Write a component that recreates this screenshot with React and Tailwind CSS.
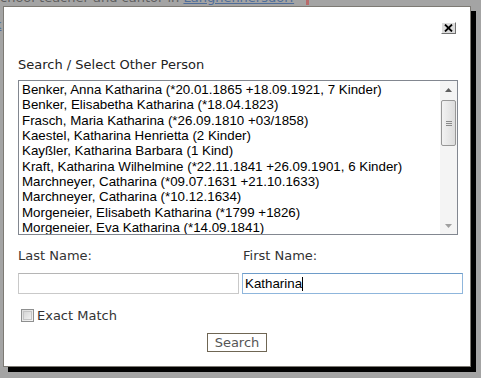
import React from "react";

const items = [
  "Benker, Anna Katharina (*20.01.1865 +18.09.1921, 7 Kinder)",
  "Benker, Elisabetha Katharina (*18.04.1823)",
  "Frasch, Maria Katharina (*26.09.1810 +03/1858)",
  "Kaestel, Katharina Henrietta (2 Kinder)",
  "Kayßler, Katharina Barbara (1 Kind)",
  "Kraft, Katharina Wilhelmine (*22.11.1841 +26.09.1901, 6 Kinder)",
  "Marchneyer, Catharina (*09.07.1631 +21.10.1633)",
  "Marchneyer, Catharina (*10.12.1634)",
  "Morgeneier, Elisabeth Katharina (*1799 +1826)",
  "Morgeneier, Eva Katharina (*14.09.1841)",
];

const verdana = { fontFamily: '"DejaVu Sans", Verdana, sans-serif' };
const arial = { fontFamily: '"Liberation Sans", Arial, sans-serif' };

export default function App() {
  return (
    <div className="relative w-[481px] h-[378px] overflow-hidden bg-[#a4a4a4]">
      {/* dimmed page behind */}
      <div className="text-[13px] leading-[15px] text-[#5e5e5e] -mt-[10px] whitespace-nowrap" style={verdana}>
        chool teacher and cantor in{" "}
        <span className="text-[#4f6d99] underline">Langhennersdorf</span>
        <span className="inline-block w-[3px] h-[15px] bg-[#b86a6a] ml-[12px] align-top" />
      </div>
      <div className="mt-[12px] -ml-[6px] text-[13px] leading-[15px] text-[#4f6d99] underline" style={verdana}>
        k
      </div>

      {/* dialog */}
      <div className="absolute left-[3px] top-[6px] w-[468px] h-[361px] bg-white border border-[#7d7a74] shadow-[5px_5px_0_0_#000]">
        <div className="pt-[15px] pl-[14px] pr-[7px]">
          <div className="flex justify-end pr-[7px]">
            <div className="w-[15px] h-[12px] bg-[#dcdcdc] border border-t-white border-l-white border-r-[#707070] border-b-[#707070] flex items-center justify-center">
              <svg width="9" height="8" viewBox="0 0 9 8">
                <path d="M1 0.5 L8 7.5 M8 0.5 L1 7.5" stroke="#000" strokeWidth="1.8" />
              </svg>
            </div>
          </div>

          <div className="mt-[23px] text-[13px] leading-[15px] text-[#222]" style={verdana}>
            Search / Select Other Person
          </div>

          <div className="mt-[8px] w-[440px] h-[155px] border border-[#828790] flex bg-white">
            <div className="flex-1 pl-[3px] pt-[1px] overflow-hidden" style={arial}>
              {items.map((t) => (
                <div key={t} className="text-[13.33px] leading-[15.33px] text-black whitespace-nowrap">
                  {t}
                </div>
              ))}
            </div>
            <div className="w-[17px] h-full bg-[#f4f4f4] flex flex-col items-center">
              <div className="h-[17px] flex items-center justify-center">
                <svg width="7" height="4" viewBox="0 0 7 4">
                  <path d="M0 4 L3.5 0 L7 4 Z" fill="#606060" />
                </svg>
              </div>
              <div className="mt-[2px] w-[15px] h-[46px] rounded-[2px] border border-[#979797] bg-gradient-to-r from-[#f2f2f2] to-[#dcdcdc] flex flex-col items-center justify-center gap-[1px]">
                <div className="w-[6px] h-[1px] bg-[#8a8a8a]" />
                <div className="w-[6px] h-[1px] bg-[#8a8a8a]" />
                <div className="w-[6px] h-[1px] bg-[#8a8a8a]" />
              </div>
              <div className="flex-1" />
              <div className="h-[17px] flex items-center justify-center">
                <svg width="7" height="4" viewBox="0 0 7 4">
                  <path d="M0 0 L3.5 4 L7 0 Z" fill="#a0a0a0" />
                </svg>
              </div>
            </div>
          </div>

          <div className="mt-[13px] grid grid-cols-[221px_221px] gap-x-[3px]">
            <div className="text-[13px] leading-[15px] text-[#333]" style={verdana}>Last Name:</div>
            <div className="text-[13px] leading-[15px] text-[#333] pl-[1px]" style={verdana}>First Name:</div>
            <div className="mt-[10px] h-[21px] border border-[#c9c9c9] border-t-[#b5b5b5] bg-white" />
            <div className="mt-[10px] h-[21px] border border-[#8fb6dc] border-t-[#6e9cc9] bg-white flex items-center pl-[2px]" style={arial}>
              <span className="text-[13.33px] text-black leading-none">Katharina</span>
              <span className="w-[1px] h-[14px] bg-black" />
            </div>
          </div>

          <div className="mt-[14px] flex items-center pl-[3px]">
            <div className="w-[13px] h-[13px] border border-[#8e8f8f] bg-gradient-to-br from-[#dcdcdc] to-[#f6f6f6] p-[1px]">
              <div className="w-full h-full border border-[#c4c4c4] bg-gradient-to-br from-[#d6d6d6] to-[#f0f0f0]" />
            </div>
            <span className="ml-[3px] text-[13px] leading-[15px] text-[#333]" style={verdana}>Exact Match</span>
          </div>
        </div>

        <div className="mt-[10px] flex justify-center">
          <div className="w-[60px] h-[19px] border border-[#6f6654] bg-white flex items-center justify-center text-[13px] leading-none text-[#555]" style={verdana}>
            Search
          </div>
        </div>
      </div>
    </div>
  );
}
